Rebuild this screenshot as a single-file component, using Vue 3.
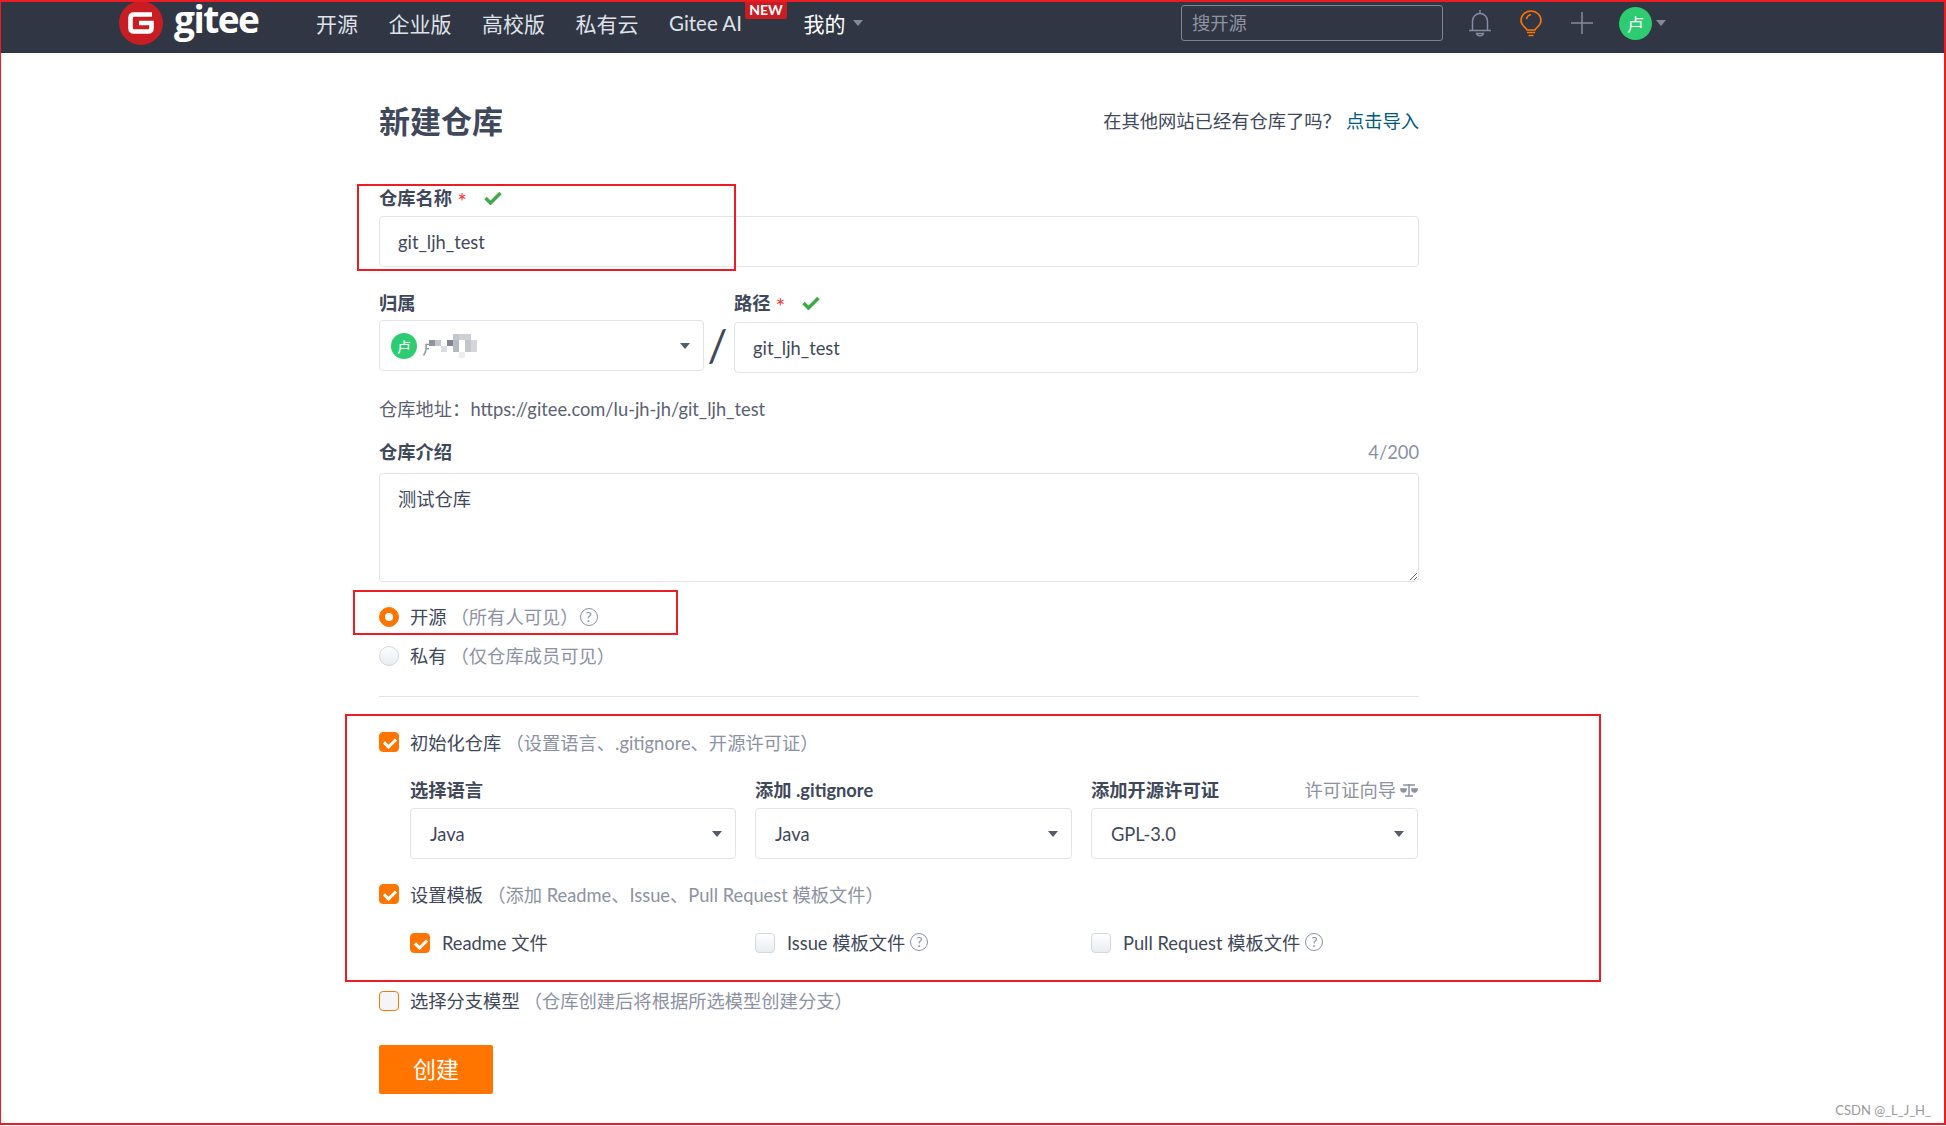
<template>
  <div class="page">
    <header class="topbar">
      <div class="logo">
        <svg class="logo-mark" viewBox="0 0 44 44" width="44" height="44">
          <circle cx="22" cy="22" r="22" fill="#c71d23" />
          <path d="M33 13.500H15Q11.500 13.500 11.500 17V27Q11.500 30.500 15 30.500H29Q32.500 30.500 32.500 27V22H20" fill="none" stroke="#fff" stroke-width="4.600" />
        </svg>
        <span class="logo-text">gitee</span>
      </div>
      <nav class="nav">
        <a v-for="item in navItems" :key="item">{{ item }}</a>
        <a class="nav-ai">Gitee AI<span class="new-badge">NEW</span></a>
        <a class="nav-mine">我的<i class="caret caret-gray"></i></a>
      </nav>
      <div class="top-right">
        <input class="search" type="text" placeholder="搜开源" />
        <svg class="bell" viewBox="0 0 22 27" width="22" height="27" fill="none" stroke="#858ba0" stroke-width="1.500">
          <path d="M11 0v3M3.500 20v-9a7.500 7.500 0 0 1 15 0v9M0 20.500h22" />
          <path d="M7.500 23.500h7c-.500 3-6.500 3-7 0z" />
        </svg>
        <svg class="bulb" viewBox="0 0 22 27" width="22" height="27" fill="none" stroke="#ff7500" stroke-width="1.600">
          <path d="M7 20c-.500-2.500-6-4-6-9.500a10 9.500 0 0 1 20 0c0 5.500-5.500 7-6 9.500z" />
          <path d="M7 22.500h8M8.500 25.500h5M11 4.500c-2.500.500-4 2-4.500 4.500" />
        </svg>
        <svg class="plus" viewBox="0 0 22 22" width="22" height="22" stroke="#858ba0" stroke-width="1.500">
          <path d="M11 0v22M0 11h22" />
        </svg>
        <span class="avatar">卢</span>
        <i class="caret caret-gray"></i>
      </div>
    </header>

    <main class="form">
      <div class="title-row">
        <h1>新建仓库</h1>
        <p>在其他网站已经有仓库了吗？<a>点击导入</a></p>
      </div>

      <div class="label name-label">
        <b>仓库名称</b><em>*</em>
        <svg class="tick" viewBox="0 0 18 14" width="18" height="14"><path d="M1.500 7l5 5 10-10" fill="none" stroke="#3faa4a" stroke-width="3.500" /></svg>
      </div>
      <input v-model="repoName" class="text-input" type="text" />

      <div class="owner-row">
        <div class="owner-col">
          <div class="label"><b>归属</b></div>
          <div class="select owner-select">
            <span class="avatar avatar-small">卢</span>
            <span class="owner-first">卢</span>
            <svg class="mosaic" viewBox="0 0 48 24" width="48" height="24">
              <rect x="0" y="6" width="6" height="6" fill="#8f93a0" />
              <rect x="6" y="6" width="6" height="6" fill="#c4c6ce" />
              <rect x="12" y="12" width="6" height="6" fill="#dcdde2" />
              <rect x="18" y="6" width="6" height="6" fill="#7f8392" />
              <rect x="24" y="0" width="6" height="6" fill="#c4c6ce" />
              <rect x="24" y="6" width="6" height="12" fill="#b6b8c2" />
              <rect x="30" y="0" width="12" height="6" fill="#cfd0d7" />
              <rect x="36" y="6" width="6" height="12" fill="#c4c6ce" />
              <rect x="42" y="6" width="6" height="12" fill="#d6d7dd" />
              <rect x="30" y="18" width="6" height="6" fill="#eeeef1" />
            </svg>
            <i class="caret"></i>
          </div>
        </div>
        <span class="slash">/</span>
        <div class="path-col">
          <div class="label">
            <b>路径</b><em>*</em>
            <svg class="tick" viewBox="0 0 18 14" width="18" height="14"><path d="M1.500 7l5 5 10-10" fill="none" stroke="#3faa4a" stroke-width="3.500" /></svg>
          </div>
          <input v-model="repoPath" class="text-input path-input" type="text" />
        </div>
      </div>

      <p class="address">仓库地址：https://gitee.com/lu-jh-jh/git_ljh_test</p>

      <div class="label intro-label">
        <b>仓库介绍</b>
        <span class="counter">{{ intro.length }}/200</span>
      </div>
      <textarea v-model="intro" class="intro"></textarea>

      <label class="option radio-first">
        <input v-model="visibility" type="radio" value="public" />
        <span class="option-text">开源</span>
        <span class="hint">（所有人可见）</span>
        <span class="help">?</span>
      </label>
      <label class="option radio-second">
        <input v-model="visibility" type="radio" value="private" />
        <span class="option-text">私有</span>
        <span class="hint">（仅仓库成员可见）</span>
      </label>

      <div class="divider"></div>

      <label class="option init-row">
        <input v-model="useInit" type="checkbox" />
        <span class="option-text">初始化仓库</span>
        <span class="hint">（设置语言、.gitignore、开源许可证）</span>
      </label>

      <div class="sub-grid select-grid">
        <div>
          <div class="label"><b>选择语言</b></div>
          <div class="select"><span>Java</span><i class="caret"></i></div>
        </div>
        <div>
          <div class="label"><b>添加 .gitignore</b></div>
          <div class="select"><span>Java</span><i class="caret"></i></div>
        </div>
        <div>
          <div class="label license-label">
            <b>添加开源许可证</b>
            <span class="license-guide">
              许可证向导
              <svg viewBox="0 0 18 14" width="18" height="14" fill="none" stroke="#8c92a4" stroke-width="1.500">
                <path d="M9 1v12M5 13h8M3 2h12" />
                <path d="M.5 5.500h6v1a3 3 0 0 1-6 0zM11.500 5.500h6v1a3 3 0 0 1-6 0z" fill="#8c92a4" stroke-width="0.600" />
              </svg>
            </span>
          </div>
          <div class="select"><span>GPL-3.0</span><i class="caret"></i></div>
        </div>
      </div>

      <label class="option template-row">
        <input v-model="useTemplate" type="checkbox" />
        <span class="option-text">设置模板</span>
        <span class="hint">（添加 Readme、Issue、Pull Request 模板文件）</span>
      </label>

      <div class="sub-grid template-grid">
        <label class="option">
          <input v-model="useReadme" type="checkbox" />
          <span class="option-text">Readme 文件</span>
        </label>
        <label class="option">
          <input v-model="useIssue" type="checkbox" />
          <span class="option-text">Issue 模板文件</span>
          <span class="help help-tight">?</span>
        </label>
        <label class="option">
          <input v-model="usePull" type="checkbox" />
          <span class="option-text">Pull Request 模板文件</span>
          <span class="help help-tight">?</span>
        </label>
      </div>

      <label class="option branch-row">
        <input v-model="useBranch" class="orange-box" type="checkbox" />
        <span class="option-text">选择分支模型</span>
        <span class="hint">（仓库创建后将根据所选模型创建分支）</span>
      </label>

      <button class="create" type="button">创建</button>
    </main>

    <!-- 截图上的红色标注框 -->
    <div class="mark mark-name"></div>
    <div class="mark mark-radio"></div>
    <div class="mark mark-init"></div>
    <div class="frame"></div>
    <span class="watermark">CSDN @_L_J_H_</span>
  </div>
</template>

<script setup>
import { ref } from 'vue';

const navItems = ['开源', '企业版', '高校版', '私有云'];

const repoName = ref('git_ljh_test');
const repoPath = ref('git_ljh_test');
const intro = ref('测试仓库');
const visibility = ref('public');
const useInit = ref(true);
const useTemplate = ref(true);
const useReadme = ref(true);
const useIssue = ref(false);
const usePull = ref(false);
const useBranch = ref(false);
</script>

<style>
html, body {
  margin: 0;
  overflow: hidden;
  background: #fff;
}
</style>

<style scoped>
.page {
  position: relative;
  width: 1946px;
  height: 1126px;
  overflow: hidden;
  background: #fff;
  color: #40485b;
  font-family: Lato, "Noto Sans CJK SC", sans-serif;
  font-size: 18.3px;
}

.topbar {
  display: flex;
  align-items: center;
  height: 53px;
  padding: 0 280px 0 119px;
  box-sizing: border-box;
  background: #303643;
}

.logo {
  display: flex;
  align-items: center;
  width: 197px;
  padding-bottom: 8px;
}

.logo-mark {
  flex: none;
}

.logo-text {
  margin: 0 0 7px 11px;
  color: #fff;
  font-family: "Open Sans", sans-serif;
  font-size: 37px;
  font-weight: 700;
  letter-spacing: -1.500px;
  line-height: 32px;
}

.nav {
  display: flex;
  align-items: center;
  gap: 30.500px;
  padding-bottom: 8px;
  color: #dfe2e8;
  font-size: 21px;
}

.nav-ai {
  position: relative;
  margin-right: 31px;
  font-size: 20.500px;
}

.new-badge {
  position: absolute;
  top: -10px;
  left: 76px;
  width: 42px;
  height: 18px;
  border-radius: 0 0 2px 2px;
  background: #c71d23;
  color: #fff;
  font-size: 14px;
  font-weight: 700;
  line-height: 18px;
  text-align: center;
}

.nav-mine {
  display: flex;
  align-items: center;
  gap: 8px;
  color: #fff;
}

.caret {
  display: block;
  flex: none;
  width: 0;
  height: 0;
  border-top: 6px solid #555c6c;
  border-left: 5px solid transparent;
  border-right: 5px solid transparent;
}

.caret-gray {
  border-top-color: #858a99;
}

.top-right {
  display: flex;
  align-items: center;
  gap: 29px;
  margin-left: auto;
  padding-bottom: 7px;
}

.search {
  width: 262px;
  height: 36px;
  padding: 0 10px;
  margin-right: -3px;
  box-sizing: border-box;
  border: 1px solid #7e8495;
  border-radius: 3px;
  outline: none;
  background: transparent;
  color: #fff;
  font: inherit;
}

.search::placeholder {
  color: #8f94a3;
}

.top-right .avatar {
  margin-left: -3px;
}

.top-right .caret {
  margin-left: -25px;
}

.avatar {
  display: flex;
  align-items: center;
  justify-content: center;
  flex: none;
  width: 33px;
  height: 33px;
  border-radius: 50%;
  background: #2ecc71;
  color: #fff;
  font-size: 17px;
}

.avatar-small {
  width: 26px;
  height: 26px;
  margin-right: 5px;
  font-size: 14px;
}

.form {
  width: 1040px;
  margin-left: 379px;
}

.title-row {
  display: flex;
  align-items: center;
  justify-content: space-between;
  height: 50px;
  margin-top: 42px;
}

h1 {
  margin: 0 0 2px;
  font-size: 31px;
  font-weight: 700;
}

.title-row p {
  margin: 0;
}

.title-row a {
  margin-left: 5px;
  color: #005980;
}

.label {
  display: flex;
  align-items: center;
  height: 24px;
  line-height: 24px;
}

.label b {
  font-weight: 700;
}

.label em {
  margin-left: 5px;
  padding-top: 6px;
  color: #f03c3c;
  font-size: 23px;
  font-style: normal;
}

.tick {
  margin-left: 17px;
}

.name-label {
  margin: 41px 0 6px;
}

.text-input {
  display: block;
  width: 100%;
  height: 51px;
  padding: 0 18px;
  box-sizing: border-box;
  border: 1px solid #dfe3ea;
  border-radius: 4px;
  outline: none;
  color: #40485b;
  font: inherit;
}

.owner-row {
  display: flex;
  margin-top: 24px;
}

.owner-col {
  width: 325px;
}

.owner-col .label {
  margin-bottom: 5px;
}

.select {
  display: flex;
  align-items: center;
  justify-content: space-between;
  height: 51px;
  padding: 0 13px 0 19px;
  box-sizing: border-box;
  border: 1px solid #dfe3ea;
  border-radius: 4px;
}

.owner-select {
  justify-content: flex-start;
  padding-left: 11px;
}

.owner-first {
  color: #8f93a0;
}

.mosaic {
  position: relative;
  flex: none;
  margin-left: -11px;
  background: #fff;
}

.owner-select .caret {
  margin-left: auto;
}

.slash {
  box-sizing: border-box;
  width: 30px;
  margin-top: 29px;
  padding-right: 3px;
  color: #40485b;
  font-size: 44px;
  font-weight: 400;
  line-height: 51px;
  text-align: center;
}

.path-col {
  width: 684px;
}

.path-col .label {
  margin-bottom: 7px;
}

.address {
  height: 24px;
  margin: 24px 0 0;
  color: #5a6173;
  line-height: 24px;
}

.intro-label {
  justify-content: space-between;
  margin: 19px 0 9px;
}

.counter {
  color: #8c92a4;
}

.intro {
  display: block;
  width: 100%;
  height: 109px;
  padding: 12px 18px;
  box-sizing: border-box;
  border: 1px solid #dfe3ea;
  border-radius: 4px;
  outline: none;
  resize: vertical;
  color: #40485b;
  font: inherit;
  line-height: 26px;
}

.option {
  display: flex;
  align-items: center;
  height: 24px;
  line-height: 24px;
}

.option input {
  position: relative;
  flex: none;
  width: 20px;
  height: 20px;
  margin: 0 11px 0 0;
  box-sizing: border-box;
  border: 1px solid #d3d7df;
  border-radius: 4px;
  background: linear-gradient(#fff, #e9ecf1);
  appearance: none;
}

.option input[type="radio"] {
  border-radius: 50%;
}

.option input:checked {
  border-color: #ff7500;
  background: #ff7500;
}

.option input[type="radio"]:checked::after {
  content: "";
  position: absolute;
  top: 5px;
  left: 5px;
  width: 8px;
  height: 8px;
  border-radius: 50%;
  background: #fff;
}

.option input[type="checkbox"]:checked::after {
  content: "";
  position: absolute;
  top: 3px;
  left: 6px;
  width: 5px;
  height: 9px;
  border-right: 3px solid #fff;
  border-bottom: 3px solid #fff;
  transform: rotate(45deg);
}

.option input.orange-box {
  border-color: #ff7500;
  background: #f5f5f7;
}

.option-text {
  color: #40485b;
}

.hint {
  margin-left: 4px;
  color: #8c92a4;
}

.help {
  display: flex;
  align-items: center;
  justify-content: center;
  width: 18px;
  height: 18px;
  margin-left: 1px;
  box-sizing: border-box;
  border: 1.500px solid #8c92a4;
  border-radius: 50%;
  color: #8c92a4;
  font-size: 14px;
  line-height: 1;
}

.help-tight {
  margin: -3px 0 0 5px;
}

.radio-first {
  margin-top: 23px;
}

.radio-second {
  margin-top: 15px;
}

.divider {
  height: 1px;
  margin-top: 28px;
  background: #dfe3ea;
}

.init-row {
  margin-top: 33px;
}

.init-row span,
.template-row span {
  padding-top: 2px;
}

.sub-grid {
  display: grid;
  grid-template-columns: 326px 317px 327px;
  gap: 19px;
  width: 1008px;
  margin-left: 31px;
}

.select-grid {
  margin-top: 24px;
}

.select-grid .label {
  margin-bottom: 6px;
}

.license-label {
  justify-content: space-between;
}

.license-guide {
  display: flex;
  align-items: center;
  gap: 4px;
  color: #8c92a4;
}

.template-row {
  margin-top: 23px;
}

.template-grid {
  margin-top: 25px;
}

.template-grid input {
  margin-right: 12px;
}

.branch-row {
  margin-top: 34px;
}

.create {
  display: block;
  width: 114px;
  height: 49px;
  margin-top: 32px;
  padding: 0 0 3px;
  border: none;
  border-radius: 2px;
  background: #ff7500;
  color: #fff;
  font: inherit;
  font-size: 23px;
}

.mark,
.frame {
  position: absolute;
  box-sizing: border-box;
  border: 2px solid #ed1c24;
  pointer-events: none;
}

.mark-name {
  top: 184px;
  left: 357px;
  width: 379px;
  height: 87px;
}

.mark-radio {
  top: 590px;
  left: 353px;
  width: 325px;
  height: 45px;
}

.mark-init {
  top: 714px;
  left: 345px;
  width: 1256px;
  height: 268px;
}

.frame {
  top: 0;
  left: 0;
  width: 1946px;
  height: 1125px;
  border-left-width: 1px;
}

.watermark {
  position: absolute;
  right: 15px;
  bottom: 8px;
  color: #9a9a9a;
  font-size: 13px;
}
</style>
